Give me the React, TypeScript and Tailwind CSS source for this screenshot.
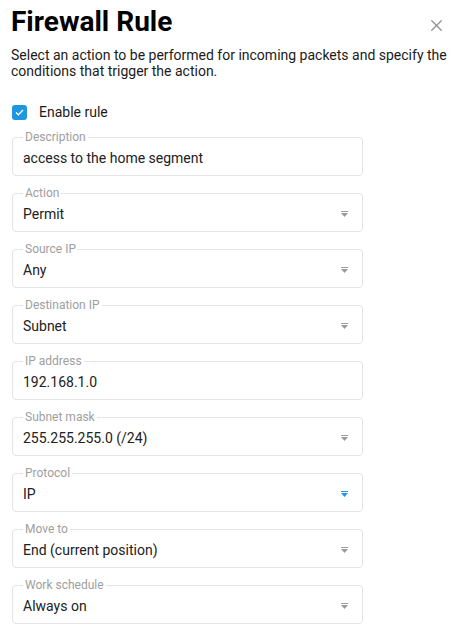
import { X } from "lucide-react";

const FIELDS = [
  { label: "Description", value: "access to the home segment", select: false },
  { label: "Action", value: "Permit", select: true },
  { label: "Source IP", value: "Any", select: true },
  { label: "Destination IP", value: "Subnet", select: true },
  { label: "IP address", value: "192.168.1.0", select: false },
  { label: "Subnet mask", value: "255.255.255.0 (/24)", select: true },
  { label: "Protocol", value: "IP", select: true, active: true },
  { label: "Move to", value: "End (current position)", select: true },
  { label: "Work schedule", value: "Always on", select: true },
];

function Arrow({ active }: { active?: boolean }) {
  return (
    <svg width="7" height="6" viewBox="0 0 7 6" className={active ? "text-[#1e96e0]" : "text-[#9a9a9a]"} aria-hidden>
      <rect x="0" y="0" width="7" height="1" fill="currentColor" />
      <path d="M0 2H7L3.5 6Z" fill="currentColor" />
    </svg>
  );
}

export default function App() {
  return (
    <div className="w-[460px] h-[636px] bg-white overflow-hidden font-['Roboto',sans-serif] text-[#212121]">
      <div className="flex items-start justify-between pl-[11px] pr-[14px] pt-[4px]">
        <h1 className="text-[28px] leading-[36px] font-bold text-black">Firewall Rule</h1>
        <button type="button" className="mt-[12px] text-[#8f8f8f]" aria-label="Close">
          <X size={19} strokeWidth={1.6} />
        </button>
      </div>
      <p className="px-[11px] mt-[7px] text-[14px] leading-[16px] text-[#1b1b1b]">
        Select an action to be performed for incoming packets and specify the conditions that trigger the action.
      </p>

      <label className="flex items-center gap-[12px] ml-[12px] mt-[24px] h-[18px]">
        <span className="w-[15px] h-[15px] rounded-[3px] bg-[#1e96e0] flex items-center justify-center">
          <svg width="9" height="7" viewBox="0 0 9 7" fill="none" aria-hidden>
            <path d="M1 3.5L3.4 5.8L8 1" stroke="white" strokeWidth="1.3" />
          </svg>
        </span>
        <span className="text-[14px] text-[#1b1b1b]">Enable rule</span>
      </label>

      <div className="flex flex-col gap-[10px] ml-[12px] w-[351px] mt-[9px]">
        {FIELDS.map((f) => (
          <fieldset key={f.label} className="border border-[#e4e4e4] rounded-[4px] px-[10px] h-[46px]">
            <legend className="px-[2px] text-[12px] leading-[14px] text-[#9e9e9e]">{f.label}</legend>
            <div className="flex items-center justify-between h-[28px] pr-[4px]">
              <span className="text-[14px] leading-[16px]">{f.value}</span>
              {f.select && <Arrow active={f.active} />}
            </div>
          </fieldset>
        ))}
      </div>
    </div>
  );
}
